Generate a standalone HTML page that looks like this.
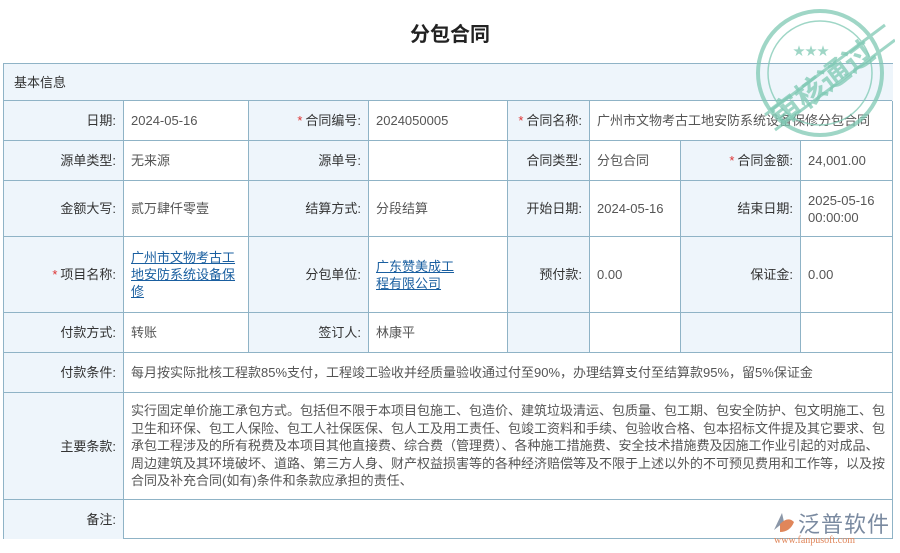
<!DOCTYPE html><html><head><meta charset="utf-8"><style>
body{margin:0;width:900px;height:553px;background:#fff;font-family:"Liberation Sans","Noto Sans CJK SC",sans-serif;position:relative;overflow:hidden;color:#555;font-size:13px}
.t{position:absolute;left:0;top:18px;width:900px;text-align:center;font-size:20px;font-weight:bold;color:#222}
.c{position:absolute;border-left:1px solid #8fb3c6;border-top:1px solid #8fb3c6;box-sizing:border-box;display:flex;align-items:center;padding:0 7px;line-height:17px}
.l{background:#eef5fb;justify-content:flex-end;color:#333}
.s{color:#d33;margin-right:3px}
a{color:#1a5fa0;text-decoration:underline}
</style></head><body>
<div class="t">分包合同</div>
<div style="position:absolute;left:3px;top:63px;width:890px;height:476px;border-right:1px solid #8fb3c6;border-bottom:1px solid #8fb3c6;box-sizing:border-box"></div>
<div class="c l" style="left:3px;top:63px;width:890px;height:38px;justify-content:flex-start;padding-left:10px">基本信息</div>
<div class="c l" style="left:3px;top:100px;width:120px;height:40px">日期:</div>
<div class="c" style="left:123px;top:100px;width:125px;height:40px">2024-05-16</div>
<div class="c l" style="left:248px;top:100px;width:120px;height:40px"><span class="s">*</span>合同编号:</div>
<div class="c" style="left:368px;top:100px;width:139px;height:40px">2024050005</div>
<div class="c l" style="left:507px;top:100px;width:82px;height:40px"><span class="s">*</span>合同名称:</div>
<div class="c" style="left:589px;top:100px;width:303px;height:40px">广州市文物考古工地安防系统设备保修分包合同</div>
<div class="c l" style="left:3px;top:140px;width:120px;height:40px">源单类型:</div>
<div class="c" style="left:123px;top:140px;width:125px;height:40px">无来源</div>
<div class="c l" style="left:248px;top:140px;width:120px;height:40px">源单号:</div>
<div class="c" style="left:368px;top:140px;width:139px;height:40px"></div>
<div class="c l" style="left:507px;top:140px;width:82px;height:40px">合同类型:</div>
<div class="c" style="left:589px;top:140px;width:91px;height:40px">分包合同</div>
<div class="c l" style="left:680px;top:140px;width:120px;height:40px"><span class="s">*</span>合同金额:</div>
<div class="c" style="left:800px;top:140px;width:92px;height:40px">24,001.00</div>
<div class="c l" style="left:3px;top:180px;width:120px;height:56px">金额大写:</div>
<div class="c" style="left:123px;top:180px;width:125px;height:56px">贰万肆仟零壹</div>
<div class="c l" style="left:248px;top:180px;width:120px;height:56px">结算方式:</div>
<div class="c" style="left:368px;top:180px;width:139px;height:56px">分段结算</div>
<div class="c l" style="left:507px;top:180px;width:82px;height:56px">开始日期:</div>
<div class="c" style="left:589px;top:180px;width:91px;height:56px">2024-05-16</div>
<div class="c l" style="left:680px;top:180px;width:120px;height:56px">结束日期:</div>
<div class="c" style="left:800px;top:180px;width:92px;height:56px">2025-05-16 00:00:00</div>
<div class="c l" style="left:3px;top:236px;width:120px;height:76px"><span class="s">*</span>项目名称:</div>
<div class="c" style="left:123px;top:236px;width:125px;height:76px"><a>广州市文物考古工地安防系统设备保修</a></div>
<div class="c l" style="left:248px;top:236px;width:120px;height:76px">分包单位:</div>
<div class="c" style="left:368px;top:236px;width:139px;height:76px;padding-right:52px"><a>广东赞美成工程有限公司</a></div>
<div class="c l" style="left:507px;top:236px;width:82px;height:76px">预付款:</div>
<div class="c" style="left:589px;top:236px;width:91px;height:76px">0.00</div>
<div class="c l" style="left:680px;top:236px;width:120px;height:76px">保证金:</div>
<div class="c" style="left:800px;top:236px;width:92px;height:76px">0.00</div>
<div class="c l" style="left:3px;top:312px;width:120px;height:40px">付款方式:</div>
<div class="c" style="left:123px;top:312px;width:125px;height:40px">转账</div>
<div class="c l" style="left:248px;top:312px;width:120px;height:40px">签订人:</div>
<div class="c" style="left:368px;top:312px;width:139px;height:40px">林康平</div>
<div class="c l" style="left:507px;top:312px;width:82px;height:40px"></div>
<div class="c" style="left:589px;top:312px;width:91px;height:40px"></div>
<div class="c l" style="left:680px;top:312px;width:120px;height:40px"></div>
<div class="c" style="left:800px;top:312px;width:92px;height:40px"></div>
<div class="c l" style="left:3px;top:352px;width:120px;height:40px">付款条件:</div>
<div class="c" style="left:123px;top:352px;width:769px;height:40px">每月按实际批核工程款85%支付，工程竣工验收并经质量验收通过付至90%，办理结算支付至结算款95%，留5%保证金</div>
<div class="c l" style="left:3px;top:392px;width:120px;height:107px">主要条款:</div>
<div class="c" style="left:123px;top:392px;width:769px;height:107px;line-height:17.5px">实行固定单价施工承包方式。包括但不限于本项目包施工、包造价、建筑垃圾清运、包质量、包工期、包安全防护、包文明施工、包卫生和环保、包工人保险、包工人社保医保、包人工及用工责任、包竣工资料和手续、包验收合格、包本招标文件提及其它要求、包承包工程涉及的所有税费及本项目其他直接费、综合费（管理费）、各种施工措施费、安全技术措施费及因施工作业引起的对成品、周边建筑及其环境破坏、道路、第三方人身、财产权益损害等的各种经济赔偿等及不限于上述以外的不可预见费用和工作等，以及按合同及补充合同(如有)条件和条款应承担的责任、</div>
<div class="c l" style="left:3px;top:499px;width:120px;height:40px">备注:</div>
<div class="c" style="left:123px;top:499px;width:769px;height:40px"></div>
<svg style="position:absolute;left:745px;top:5px" width="150" height="140" viewBox="0 0 150 140">
<g fill="none" stroke="#7fc9b4" opacity="0.75">
<circle cx="75" cy="68" r="62" stroke-width="4"/>
<circle cx="75" cy="68" r="52" stroke-width="1.5"/>
<line x1="20" y1="110" x2="140" y2="20" stroke-width="3"/>
<line x1="30" y1="125" x2="150" y2="35" stroke-width="3"/>
</g>
<text x="75" y="90" transform="rotate(-37 75 75)" text-anchor="middle" font-size="30" font-weight="bold" fill="#7fc9b4" opacity="0.75" font-family="Noto Sans CJK SC,sans-serif">审核通过</text>
<text x="48" y="50" fill="#7fc9b4" font-size="12" opacity="0.75">★★★</text>
</svg>
<div style="position:absolute;left:770px;top:507px;width:120px;height:40px">
<svg style="position:absolute;left:0;top:3px" width="26" height="26" viewBox="0 0 26 26"><path d="M4 20 L12 3 L14 12Z" fill="#8b97a8"/><path d="M10 14 Q18 6 24 12 Q20 22 10 22Z" fill="#e0865a"/></svg>
<div style="position:absolute;left:28px;top:0;font-size:22px;color:#7a8aa0;letter-spacing:1px">泛普软件</div>
<div style="position:absolute;left:4px;top:28px;font-size:10px;color:#e0865a;font-family:'Liberation Serif',serif">www.fanpusoft.com</div>
</div>
</body></html>
